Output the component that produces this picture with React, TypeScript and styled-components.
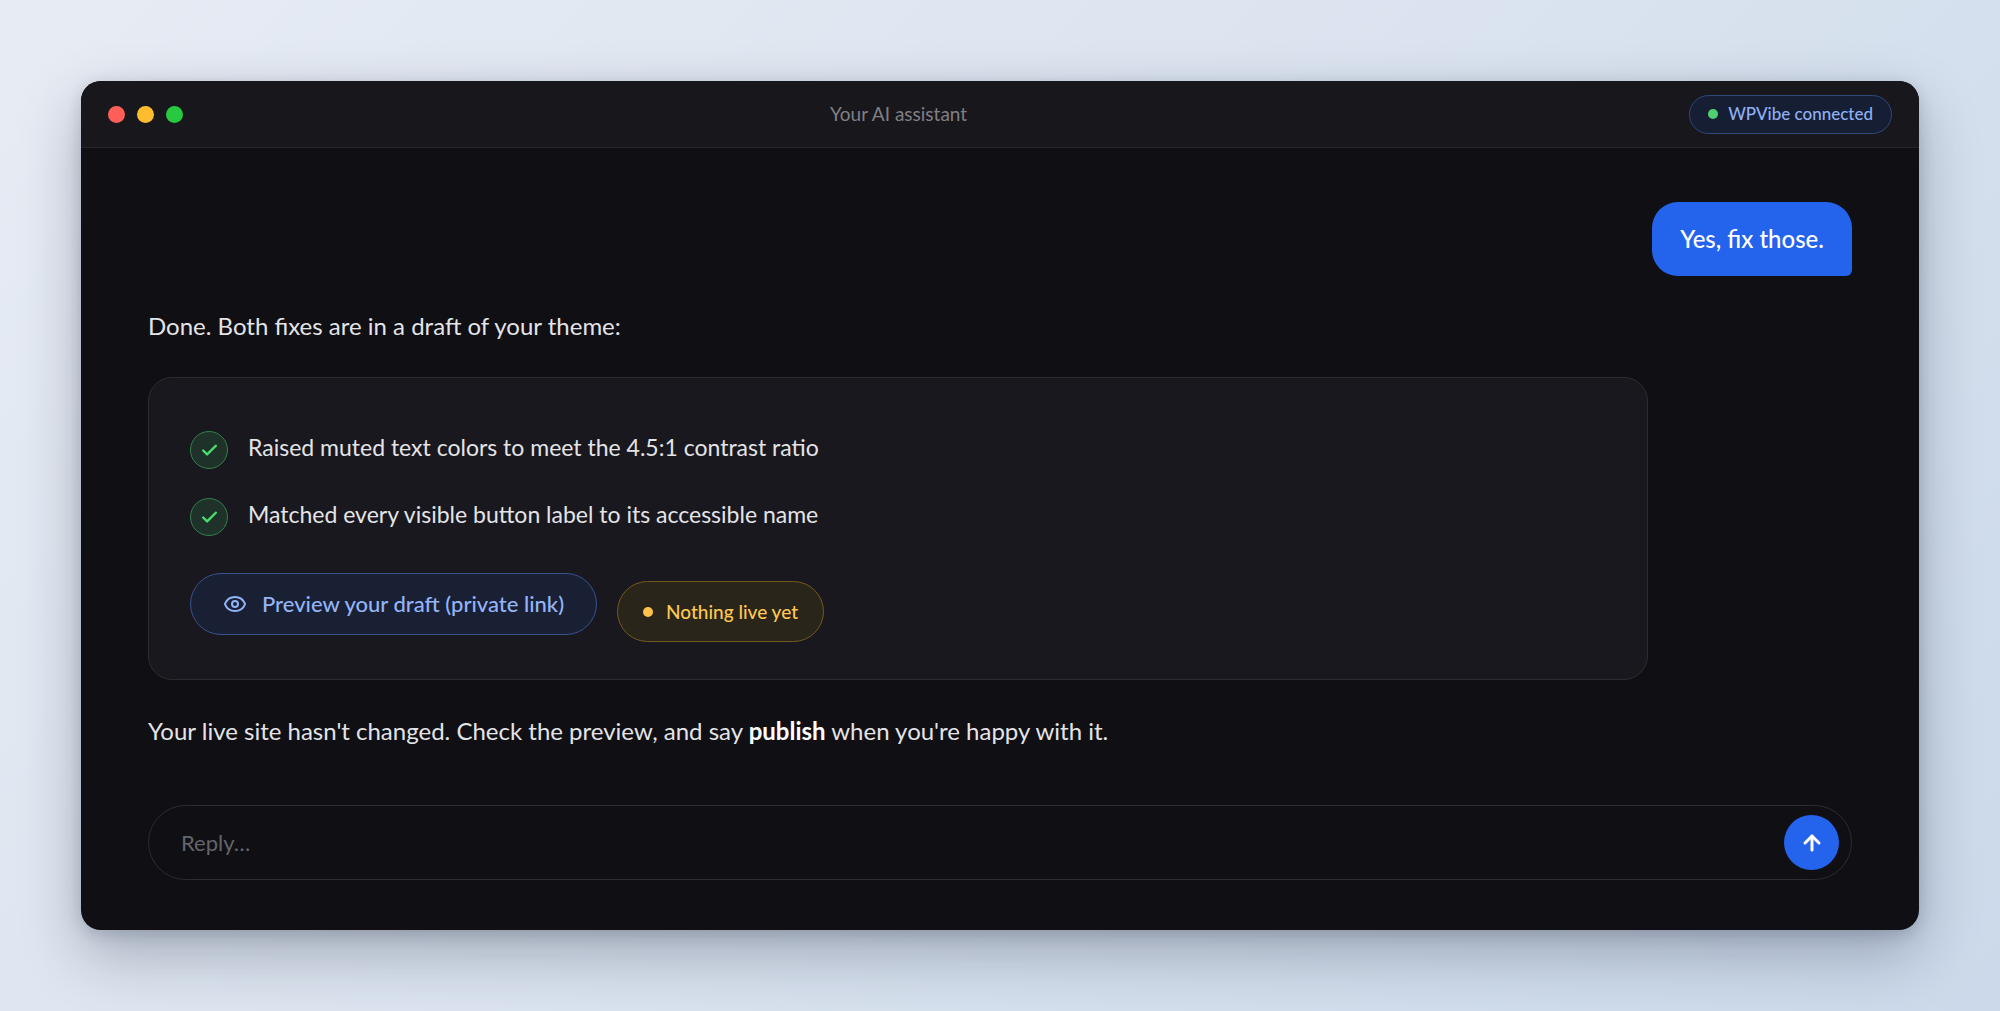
import React from "react";
import styled, { createGlobalStyle } from "styled-components";
import { ArrowUp, Check, Eye } from "lucide-react";

const Global = createGlobalStyle`
  *, *::before, *::after { box-sizing: border-box; }
  body { margin: 0; }
  body, button, input { font-family: Lato, "Open Sans", sans-serif; }
`;

const Page = styled.div`
  min-height: 100vh;
  padding: 81px;
  background: linear-gradient(135deg, #e7ecf4 0%, #dae3ef 50%, #cbd9ea 100%);
`;

const Window = styled.main`
  border-radius: 20px;
  overflow: hidden;
  background: #0f0f14;
  box-shadow: 0 24px 60px rgba(15, 23, 42, 0.28), 0 4px 16px rgba(15, 23, 42, 0.16);
`;

const TitleBar = styled.header`
  display: flex;
  align-items: center;
  height: 67px;
  padding: 0 27px;
  background: #17171c;
  border-bottom: 1px solid #26262b;
`;

const Lights = styled.div`
  display: flex;
  gap: 12px;
  width: 76px;
`;

const Light = styled.span<{ $color: string }>`
  width: 17px;
  height: 17px;
  border-radius: 50%;
  background: ${(p) => p.$color};
`;

const Title = styled.h1`
  flex: 1;
  margin: 0 76px 0 0;
  font-size: 19px;
  font-weight: 400;
  line-height: 24px;
  text-align: center;
  color: #807f84;
`;

const Dot = styled.span<{ $color: string }>`
  width: 10px;
  height: 10px;
  border-radius: 50%;
  background: ${(p) => p.$color};
`;

const Status = styled.div`
  display: flex;
  align-items: center;
  gap: 10px;
  height: 39px;
  padding: 0 18px;
  border: 1px solid #30487c;
  border-radius: 20px;
  background: #161e33;
  color: #8fb0f5;
  font-size: 17px;
  font-weight: 500;
  line-height: 24px;
`;

const Chat = styled.section`
  display: flex;
  flex-direction: column;
  align-items: flex-start;
  padding: 54px 67px 50px;
`;

const Bubble = styled.p`
  align-self: flex-end;
  margin: 0 0 31px;
  padding: 18px 28px;
  border-radius: 26px 26px 6px 26px;
  background: #2463eb;
  color: #fff;
  font-size: 24px;
  font-weight: 500;
  line-height: 38px;
`;

const Message = styled.p`
  margin: 0;
  color: #e4e4e7;
  font-size: 24px;
  line-height: 38px;

  strong { color: #fff; font-weight: 700; }
`;

const Card = styled.div`
  width: 88%;
  margin: 32px 0;
  padding: 53px 41px 37px;
  border: 1px solid #2d2d31;
  border-radius: 24px;
  background: #19181f;
`;

const Fixes = styled.ul`
  display: flex;
  flex-direction: column;
  gap: 29px;
  margin: 0;
  padding: 0;
  list-style: none;
`;

const Fix = styled.li`
  display: flex;
  gap: 20px;
  color: #e4e4e7;
  font-size: 23px;
  line-height: 32px;
`;

const CheckCircle = styled.span`
  display: grid;
  place-items: center;
  width: 38px;
  height: 38px;
  border: 1px solid #33804c;
  border-radius: 50%;
  background: #1e3229;
  color: #4ade70;
`;

const Actions = styled.div`
  display: flex;
  align-items: flex-end;
  gap: 20px;
  padding-top: 37px;
`;

const Preview = styled.a`
  display: flex;
  align-items: center;
  gap: 15px;
  height: 62px;
  margin-bottom: 7px;
  padding: 0 32px;
  border: 1px solid #37528c;
  border-radius: 31px;
  background: #1a2033;
  color: #93b4f8;
  font-size: 22px;
  font-weight: 500;
  line-height: 30px;
  text-decoration: none;
`;

const Badge = styled.span`
  display: flex;
  align-items: center;
  gap: 13px;
  height: 61px;
  padding: 0 25px;
  border: 1px solid #735a1c;
  border-radius: 31px;
  background: #2a251b;
  color: #ffc850;
  font-size: 19px;
  font-weight: 500;
  line-height: 30px;
`;

const Composer = styled.form`
  display: flex;
  align-items: center;
  align-self: stretch;
  height: 75px;
  margin-top: 55px;
  padding: 0 12px 0 32px;
  border: 1px solid #2d2d31;
  border-radius: 38px;
`;

const Reply = styled.input`
  flex: 1;
  min-width: 0;
  padding: 0;
  border: 0;
  outline: 0;
  background: transparent;
  color: #e4e4e7;
  font-size: 22px;
  line-height: 30px;

  &::placeholder { color: #64646a; opacity: 1; }
`;

const Send = styled.button`
  display: grid;
  place-items: center;
  width: 55px;
  height: 55px;
  padding: 0;
  border: 0;
  border-radius: 50%;
  background: #2463eb;
  color: #fff;
  cursor: pointer;
`;

const fixes = [
  "Raised muted text colors to meet the 4.5:1 contrast ratio",
  "Matched every visible button label to its accessible name",
];

export default function App() {
  return (
    <Page>
      <Global />
      <Window>
        <TitleBar>
          <Lights>
            <Light $color="#ff5f57" />
            <Light $color="#febc2e" />
            <Light $color="#28c840" />
          </Lights>
          <Title>Your AI assistant</Title>
          <Status>
            <Dot $color="#4fcf70" />
            WPVibe connected
          </Status>
        </TitleBar>
        <Chat>
          <Bubble>Yes, fix those.</Bubble>
          <Message>Done. Both fixes are in a draft of your theme:</Message>
          <Card>
            <Fixes>
              {fixes.map((text) => (
                <Fix key={text}>
                  <CheckCircle><Check size={19} strokeWidth={3} /></CheckCircle>
                  {text}
                </Fix>
              ))}
            </Fixes>
            <Actions>
              <Preview href="#preview">
                <Eye size={24} strokeWidth={2} />
                Preview your draft (private link)
              </Preview>
              <Badge>
                <Dot $color="#ffc24a" />
                Nothing live yet
              </Badge>
            </Actions>
          </Card>
          <Message>
            Your live site hasn't changed. Check the preview, and say <strong>publish</strong> when you're happy with it.
          </Message>
          <Composer onSubmit={(e) => e.preventDefault()}>
            <Reply type="text" placeholder="Reply…" aria-label="Reply" />
            <Send type="submit" aria-label="Send"><ArrowUp size={24} strokeWidth={3} /></Send>
          </Composer>
        </Chat>
      </Window>
    </Page>
  );
}
